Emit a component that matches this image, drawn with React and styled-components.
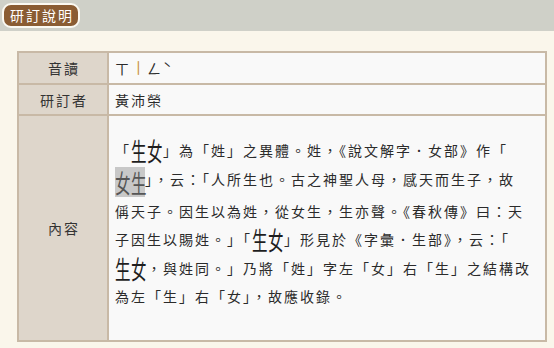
import React from "react";
import styled, { createGlobalStyle } from "styled-components";

const GlobalStyle = createGlobalStyle`
    html, body {
        margin: 0;
        padding: 0;
        background: #faf6eb;
    }
    body {
        font-family: "Noto Sans CJK TC", "Noto Sans", sans-serif;
        color: #2b2b2b;
    }
`

const Page = styled.div`
    width: 554px;
    height: 348px;
    background: #faf6eb;
    overflow: hidden;
`

const TopBar = styled.div`
    height: 31px;
    background: #cfd0c8;
    padding: 2px 0 0 2px;
    box-sizing: border-box;
`

const Tab = styled.div`
    display: inline-flex;
    align-items: center;
    height: 25px;
    box-sizing: border-box;
    padding: 0 4px 0 6px;
    background: #8a5c33;
    border: 2px solid #fbf9f2;
    border-radius: 9px;
    color: #ffffff;
    font-size: 14px;
    letter-spacing: 2px;
`

const Table = styled.div`
    display: grid;
    grid-template-columns: 88px 1fr;
    grid-template-rows: 30px 29px 224px;
    gap: 2px;
    padding: 2px;
    margin: 20px 7px 0 17px;
    background: #c8b9a6;
`

const Label = styled.div`
    display: flex;
    align-items: center;
    justify-content: center;
    background: #ded6cb;
    font-size: 14px;
    letter-spacing: 2px;
    padding-left: 2px;
    color: #333;
`

const Value = styled.div`
    display: flex;
    align-items: center;
    background: #f9f9f9;
    padding: 0 6px;
    font-size: 14px;
    letter-spacing: 2px;
    color: #2b2b2b;
`

const Medial = styled.span`
    display: inline-block;
    width: 16px;
    letter-spacing: 0;
    text-align: center;
    transform: rotate(90deg) scaleX(1.3);
    color: #c8913f;
`

const Content = styled.div`
    background: #f9f9f9;
    padding: 20px 6px 0 6px;
    font-size: 14px;
    letter-spacing: 2px;
    line-height: 28.5px;
    white-space: nowrap;
    color: #2b2b2b;
`

const Big = styled.span`
    display: inline-block;
    vertical-align: middle;
    width: ${p => p.$boxed ? "30px" : "32px"};
    height: ${p => p.$boxed ? "30px" : "24px"};
    margin-top: ${p => p.$boxed ? "2px" : "-4px"};
    letter-spacing: 0;
    line-height: ${p => p.$boxed ? "30px" : "24px"};
    font-size: 25px;
    white-space: nowrap;
    color: ${p => p.$boxed ? "#555" : "#1e1e1e"};
    background: ${p => p.$boxed ? "#c8c8c8" : "transparent"};
`

const Half = styled.span`
    display: inline-block;
    width: 25px;
    margin-right: -9px;
    transform: scaleX(0.62);
    transform-origin: left center;
`

const Variant = ({ left, right, boxed }) => (
    <Big $boxed={boxed}>
        <Half>{left}</Half>
        <Half>{right}</Half>
    </Big>
)

const App = () => {
    return (
        <Page>
            <GlobalStyle />
            <TopBar>
                <Tab>研訂說明</Tab>
            </TopBar>
            <Table>
                <Label>音讀</Label>
                <Value>ㄒ<Medial>ㄧ</Medial>ㄥˋ</Value>
                <Label>研訂者</Label>
                <Value>黃沛榮</Value>
                <Label>內容</Label>
                <Content>
                    「<Variant left="生" right="女" />」為「姓」之異體。姓，《說文解字．女部》作「<br />
                    <Variant left="女" right="生" boxed />」，云：「人所生也。古之神聖人母，感天而生子，故<br />
                    偁天子。因生以為姓，從女生，生亦聲。《春秋傳》曰：天<br />
                    子因生以賜姓。」「<Variant left="生" right="女" />」形見於《字彙．生部》，云：「<br />
                    <Variant left="生" right="女" />，與姓同。」乃將「姓」字左「女」右「生」之結構改<br />
                    為左「生」右「女」，故應收錄。
                </Content>
            </Table>
        </Page>
    )
}

export default App;
